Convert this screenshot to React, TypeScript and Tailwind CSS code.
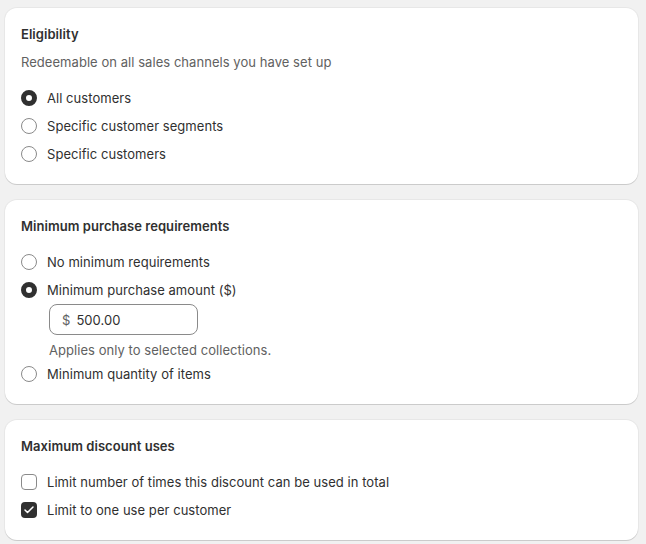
import { Check } from 'lucide-react';

function Radio({ label, checked }: { label: string; checked?: boolean }) {
  return (
    <label className="flex items-center gap-[10px] h-7">
      <span
        className={
          checked
            ? 'w-4 h-4 rounded-full border-[5px] border-[#303030] bg-white shrink-0'
            : 'w-4 h-4 rounded-full border border-[#8a8a8a] bg-white shrink-0'
        }
      />
      <span className="text-[#303030]">{label}</span>
    </label>
  );
}

function Checkbox({ label, checked }: { label: string; checked?: boolean }) {
  return (
    <label className="flex items-center gap-[10px] h-7">
      {checked ? (
        <span className="w-4 h-4 rounded-[4px] bg-[#303030] flex items-center justify-center shrink-0">
          <Check className="w-3 h-3 text-white" strokeWidth={3} />
        </span>
      ) : (
        <span className="w-4 h-4 rounded-[4px] border border-[#8a8a8a] bg-white shrink-0" />
      )}
      <span className="text-[#303030]">{label}</span>
    </label>
  );
}

function Card({ title, children }: { title: string; children: React.ReactNode }) {
  return (
    <div className="bg-white rounded-xl px-4 pt-4 pb-4 shadow-[0_1px_0_0_rgba(0,0,0,0.12),0_0_0_1px_rgba(0,0,0,0.04)]">
      <h2 className="font-semibold text-[#303030] leading-5">{title}</h2>
      {children}
    </div>
  );
}

export default function App() {
  return (
    <div
      className="min-h-screen bg-[#f1f1f1] pl-[5px] pr-2 pt-2 pb-4 flex flex-col gap-4 text-[13px] leading-5 tracking-[0.05px]"
      style={{ fontFamily: 'Inter, "Noto Sans", sans-serif' }}
    >
      {/* Eligibility */}
      <Card title="Eligibility">
        <p className="mt-2 text-[#616161]">Redeemable on all sales channels you have set up</p>
        <div className="mt-3 flex flex-col">
          <Radio label="All customers" checked />
          <Radio label="Specific customer segments" />
          <Radio label="Specific customers" />
        </div>
      </Card>

      {/* Minimum purchase requirements */}
      <Card title="Minimum purchase requirements">
        <div className="mt-3 flex flex-col">
          <Radio label="No minimum requirements" />
          <Radio label="Minimum purchase amount ($)" checked />
          <div className="pl-7">
            <div className="w-[149px] h-[31px] border border-[#8a8a8a] rounded-lg flex items-center px-3 gap-[6px]">
              <span className="text-[#616161]">$</span>
              <span className="text-[#303030]">500.00</span>
            </div>
            <p className="mt-[5px] text-[#616161]">Applies only to selected collections.</p>
          </div>
          <Radio label="Minimum quantity of items" />
        </div>
      </Card>

      {/* Maximum discount uses */}
      <Card title="Maximum discount uses">
        <div className="mt-3 flex flex-col">
          <Checkbox label="Limit number of times this discount can be used in total" />
          <Checkbox label="Limit to one use per customer" checked />
        </div>
      </Card>
    </div>
  );
}
